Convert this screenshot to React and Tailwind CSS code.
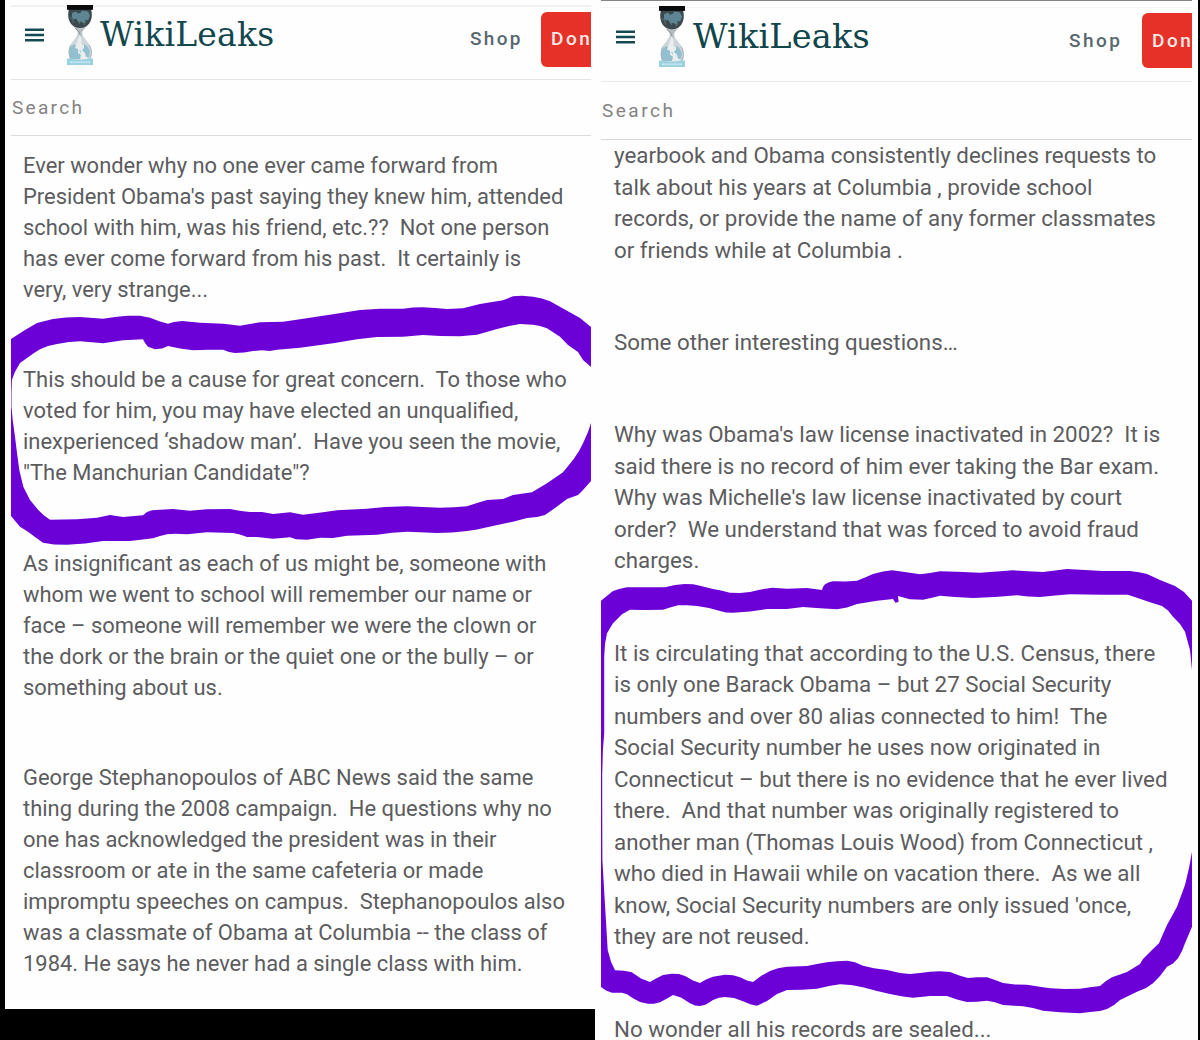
const leftParagraphs = [
  [
    'Ever wonder why no one ever came forward from',
    "President Obama's past saying they knew him, attended",
    'school with him, was his friend, etc.??  Not one person',
    'has ever come forward from his past.  It certainly is',
    'very, very strange...',
  ],
  [
    'This should be a cause for great concern.  To those who',
    'voted for him, you may have elected an unqualified,',
    'inexperienced ‘shadow man’.  Have you seen the movie,',
    '"The Manchurian Candidate"?',
  ],
  [
    'As insignificant as each of us might be, someone with',
    'whom we went to school will remember our name or',
    'face – someone will remember we were the clown or',
    'the dork or the brain or the quiet one or the bully – or',
    'something about us.',
  ],
  [
    'George Stephanopoulos of ABC News said the same',
    'thing during the 2008 campaign.  He questions why no',
    'one has acknowledged the president was in their',
    'classroom or ate in the same cafeteria or made',
    'impromptu speeches on campus.  Stephanopoulos also',
    'was a classmate of Obama at Columbia -- the class of',
    '1984. He says he never had a single class with him.',
  ],
];

const rightParagraphs = [
  [
    'yearbook and Obama consistently declines requests to',
    'talk about his years at Columbia , provide school',
    'records, or provide the name of any former classmates',
    'or friends while at Columbia .',
  ],
  ['Some other interesting questions…'],
  [
    "Why was Obama's law license inactivated in 2002?  It is",
    'said there is no record of him ever taking the Bar exam.',
    "Why was Michelle's law license inactivated by court",
    'order?  We understand that was forced to avoid fraud',
    'charges.',
  ],
  [
    'It is circulating that according to the U.S. Census, there',
    'is only one Barack Obama – but 27 Social Security',
    'numbers and over 80 alias connected to him!  The',
    'Social Security number he uses now originated in',
    'Connecticut – but there is no evidence that he ever lived',
    'there.  And that number was originally registered to',
    'another man (Thomas Louis Wood) from Connecticut ,',
    'who died in Hawaii while on vacation there.  As we all',
    "know, Social Security numbers are only issued 'once,",
    'they are not reused.',
  ],
  ['No wonder all his records are sealed...'],
];

// Marker outlines, in page coordinates
const leftMarker = [
  '11,339 25,330 37,323 53,319 66,317.5 80,317 103,318.7 117,316.7 128,315.8 140,315.7 150,317.7 160,321.5 168,323.7 174,322 182,321 200,322.7 223,323.7 232,324.7 240,325.7 250,324 260,322.3 283,321.7 300,319.3 333,314.3 360,310 380,308.7 403,308.7 413,307.6 423,307.3 435,308 447,309 463,308.3 480,304 503,300.3 513,296.3 522,295.8 533,296.7 542,298.5 550,301.3 567,310.7 580,318 591,327 591,367 583,360 578,352 568,345 560,336.7 547,328.3 540,326 533,324.7 520,324 509,326 497,329 477,334.7 460,336.3 440,336 423,335 403,336.7 377,337 357,339.3 333,343.3 300,347.7 277,349.7 270,351 262,350.3 253,351 244,352.5 235,353 229,352 223,349.7 208,349.7 193,350.3 180,348.5 168,346 162,348.5 155,349.3 148,346.7 145,343 143,339.3 123,340.3 103,343.3 92,342.3 80,341.3 69,342 57,344 48,346 40,349.3 34,353 28,357.3 20,363 15,371.7 11.9,380 11.5,393 11.5,407 12.7,420 15,436.7 17,453 19.3,470 23.3,486.7 30,500 38.3,510 44,515.5 50,519.7 77,519.3 97,517.7 110,515 123,517 143,515.3 147,512 152,510.3 173,509 190,510.7 207,509.3 230,509 241,511 250,512 262,512 273,514 290,512.3 303,514.7 323,512.3 337,510.3 367,508.7 385,507 407,506.3 423,507 440,507.7 454,507.3 467,506.3 477,503 487,500 503,499 513,495 532,492.3 547,483.3 563,472.3 573,460 579,451 583,443.3 588,432 591,423 591,481 583,490 578,495 567,499 555,508 545,515 537,517 527,518 513,521.7 487,527.3 477,529.5 467,531 452,532.5 437,533 420,532.2 407,531.7 392,532.8 377,534.7 347,535.7 333,538 320,537.7 307,539.7 296,539.3 290,537.3 273,538.7 257,537 247,537 240,534.5 233,533 207,532.3 187,534.3 175,533.7 167,534.3 160,536 153,538.3 130,541 103,541 85,543.4 67,544.7 54,544.5 43,542.7 35,537 28,531.7 20,526.7 11,516',
];
const rightMarker = [
  '601,600.7 613,591 620,588.7 627,587.3 645,587.3 665,587.3 675,585 685,584 693,584.3 700,585.7 713,589 721,590.5 730,592.7 740,593 750,592 761,589.5 772,587.7 787,588.7 807,588 822,590 823,587 825,584.3 829,582.3 833,581.3 845,581.5 857,580.7 865,577.5 873,574 883,571.5 892,570.3 903,571.7 920,574.3 930,573 940,571.3 957,571.7 980,572.7 997,571.5 1013,570.3 1028,571.3 1043,572 1055,570.5 1067,569 1085,570 1103,571 1130,571 1139,572.2 1147,574 1160,580 1175,586 1184,592 1192,600.7 1192,670 1190,650 1185,631.7 1180,624 1173,616.7 1168,610.5 1162,606 1150,602.3 1139,598.5 1128,594.7 1103,594.7 1070,594.3 1055,595.5 1040,597 1028,596.5 1017,595.3 995,597 973,598 955,597 940,595.7 932,597.7 923,599.7 910,599.3 898,596 898.6,602 895.5,602.8 893,599 877,600.7 857,604 847,607.5 837,609.3 820,608.3 803,607 787,609 767,609 750,611.5 733,612.7 726,612.5 720,611 709,608 697,606 687,605.2 678,605.3 670,607.5 663,609.7 645,610 630,609.7 622,614.3 613,623.3 607,633.3 605,644 604.2,656.7 604.2,733 602.9,750 602.2,775 602.2,800 602.4,860 604.7,900 607.7,950 611,961.7 615,970.3 624,970.8 631.7,972.3 641,978.5 650,982 656,978.5 663,975 671.7,973.7 679,974 685,976 693,980.5 700,983 706,979.5 713,976.7 725,974.7 733,975.3 740,977.3 747,980.5 753,982 761,976 770,971 778,968.3 787,966.7 807,966 817,964 827,962.3 837,961.2 847,960.7 855,962.3 863,965.7 874,968.3 887,970 900,973 910,974 920,973 930,971.7 940,971.3 950,972 960,975.7 968,978 977,977.2 987,977.3 995,980 1003,983 1015,984.5 1027,984.7 1038,986.5 1050,988.3 1065,989 1080,988.7 1090,987.3 1100,986 1106,981 1112,977.3 1120,974.5 1127,972 1140,964 1143,959 1147,955 1153,949 1159,943.3 1163,934 1167,925 1177,906.7 1185,885 1189,868 1192,851.7 1192,926.7 1185,943.3 1182,951 1178,958.3 1173,963.5 1167,966.7 1160,976 1153,983.3 1146,988 1137,991.7 1120,1000 1114,1005 1107,1009 1100,1011 1090,1012 1080,1013.3 1060,1012.3 1043,1010.7 1033,1008 1023,1006.3 1003,1005 995,1002.3 987,1000.7 977,1001.7 967,1002 957,999.5 947,996 930,996 913,997.7 903,996.5 890,994 877,991 863,987.3 851,985 840,984.3 829,986 817,988.7 802,989.7 787,990 777,994 767,1001 757,1005.7 751,1004.5 743,1001.3 734,998 725,997 719,997.7 713,1000 706,1004.5 700,1006 695,1005.5 690,1003.3 681,997.5 673,995 667,998.5 660,1002.3 654,1003.8 648,1003.7 640,1002 633,998.3 627,994.3 622,992.7 612,992.7 606,990.5 601,987',
];

function Hourglass({ className }) {
  return (
    <svg viewBox="0 0 26 60" preserveAspectRatio="none" className={className}>
      <path d="M2 4C0 12 2 18 7 22c3 2.500 4 4.500 3.500 7-.5 3-3 5-5 8C1 42 1 48 3 55h20c2-7 2-13-2.500-18-2-3-4.500-5-5-8-.5-2.500.5-4.500 3.500-7 5-4 7-10 5-18z" fill="#cfd6d9" />
      <path d="M2 4C0 12 2 18 7 21.500q6 3 12 0C24 18 26 12 24 4z" fill="#3b484c" />
      <path d="M5 8l4-1.500 2 2 3-1 1-2 6 1 2 4-2 5-2-1-2 4-3-2-2 1-3-4-2 1-2-2z" fill="#5d8594" />
      <path d="M2.500 12l3 2 1 4M10 15l3 4M19 16l-2 4" fill="none" stroke="#58717b" />
      <path d="M7 22q6 3 12 0l-4.500 5v6h-3v-6z" fill="#b4bbbd" />
      <path d="M8 23q3 3 4.500 5l.5 5" fill="none" stroke="#7b8486" strokeWidth=".8" />
      <path d="M12.500 29l2 4 0 6 4 3 3 5-1 7H6l-2-7 2-5 4-4z" fill="#e9edee" />
      <path d="M3 43l4-4 2 1-1 3 3 1 0 4 3 2-1 4H4c-2-4-2-7-1-11zM17 39l3 2 3 5-1 6-3 0-1-4-3-3 2-2zM12 45l2 1v2z" fill="#93c0d0" />
      <path d="M4 40C1 45 2 51 4 54M22 40c3 4 3 10 1 14" fill="none" stroke="#9fb3ba" />
      <path d="M0 0h26v4.800H0z" fill="#090b0c" />
      <path d="M0 53.500h5q8 3 16 0h5V60H0z" fill="#9bd2e2" />
      <path d="M3 57.200h20" stroke="#cbeaf2" strokeWidth="1.500" strokeDasharray="2 .6" />
    </svg>
  );
}

function MenuIcon() {
  return (
    <svg viewBox="0 0 19 14" className="h-3.5 w-[19px] shrink-0 fill-[#164a52]">
      <path d="M0 .4h19v2.500H0zM0 5.700h19v2.500H0zM0 11h19v2.500H0z" />
    </svg>
  );
}

function Paragraphs({ items, className }) {
  return (
    <div className={className}>
      {items.map((lines) => (
        <p key={lines[0]}>
          {lines.map((line) => (
            <span key={line} className="block whitespace-pre">{line}</span>
          ))}
        </p>
      ))}
    </div>
  );
}

function Marker({ outlines, className }) {
  return (
    <svg viewBox="0 0 1200 1040" className={className}>
      {outlines.map((points) => (
        <polygon key={points.slice(0, 20)} points={points} fill="#6b00d7" />
      ))}
    </svg>
  );
}

export default function App() {
  return (
    <div className="relative flex h-[1040px] w-[1200px] overflow-hidden bg-[#fefefe] font-['Roboto',sans-serif] text-[#5c5c5e]">
      {/* Left capture */}
      <section className="flex h-full w-[595px] shrink-0 flex-col border-l-[5px] border-black bg-black">
        <div className="h-[1009px] bg-[#fefefe] pl-1.5 pr-1">
          <header className="h-20 overflow-hidden border-b border-[#e4e4e4]">
            <div className="h-[5px]" />
            <div className="flex h-[74px] items-start border-t-2 border-[#f1f1f1] pl-3.5">
              <div className="mt-[21px]"><MenuIcon /></div>
              <Hourglass className="-mt-0.5 ml-[23px] h-[60px] w-[26px] shrink-0" />
              <span className="ml-[7px] mt-[7px] w-[174px] shrink-0 font-['DejaVu_Serif',serif] text-[33px] leading-[42px] tracking-[0.2px] text-[#12474d]">WikiLeaks</span>
              <span className="ml-[196px] mt-5 w-[71px] shrink-0 text-[19px] font-medium leading-6 tracking-[2.300px] text-[#56686e]">Shop</span>
              <span className="mt-[5px] h-[55px] w-[100px] shrink-0 rounded-md bg-[#e53127] pl-2.5 pt-[15px] text-[19px] font-medium leading-6 tracking-[2.500px] text-[#fbe9e7]">Don</span>
            </div>
          </header>
          <div className="flex h-14 items-center border-b border-[#dcdcdc] pt-0.5 pl-px text-[19px] tracking-[2.300px] text-[#838383]">Search</div>
          <Paragraphs items={leftParagraphs} className="space-y-[59.300px] pl-3 pt-[14.200px] text-[21.930px] leading-[31px]" />
        </div>
      </section>

      {/* Right capture */}
      <section className="h-full w-[602.500px] shrink-0 pl-1.5 pr-[5.500px]">
        <header className="h-[82px] overflow-hidden border-b border-[#e8e8e8]">
          <div className="-ml-1 h-[7px] border-t border-[#858587]" />
          <div className="flex h-[75px] items-start border-t border-[#f4f4f4] pl-[15px]">
            <div className="mt-[22px]"><MenuIcon /></div>
            <Hourglass className="-mt-0.5 ml-6 h-[61px] w-[26px] shrink-0" />
            <span className="ml-2 mt-2 w-[177px] shrink-0 font-['DejaVu_Serif',serif] text-[33.500px] leading-[42px] tracking-[0.2px] text-[#0f454b]">WikiLeaks</span>
            <span className="ml-[199px] mt-[21px] w-[73px] shrink-0 text-[19px] font-medium leading-6 tracking-[2.500px] text-[#56686e]">Shop</span>
            <span className="mt-[5px] h-[55px] w-[100px] shrink-0 rounded-md bg-[#e53127] pl-2.5 pt-4 text-[19px] font-medium leading-6 tracking-[2.500px] text-[#fbe9e7]">Don</span>
          </div>
        </header>
        <div className="flex h-[58px] items-center border-b border-[#d6d6d6] pt-0.5 pl-px text-[19px] tracking-[2.500px] text-[#838383]">Search</div>
        <Paragraphs items={rightParagraphs} className="space-y-[60.900px] pl-[13px] text-[22.330px] leading-[31.520px]" />
      </section>
      <div className="w-[2.500px] shrink-0 bg-black" />

      <Marker outlines={leftMarker} className="pointer-events-none absolute inset-0 h-full w-full" />
      <Marker outlines={rightMarker} className="pointer-events-none absolute inset-0 h-full w-full" />
    </div>
  );
}
